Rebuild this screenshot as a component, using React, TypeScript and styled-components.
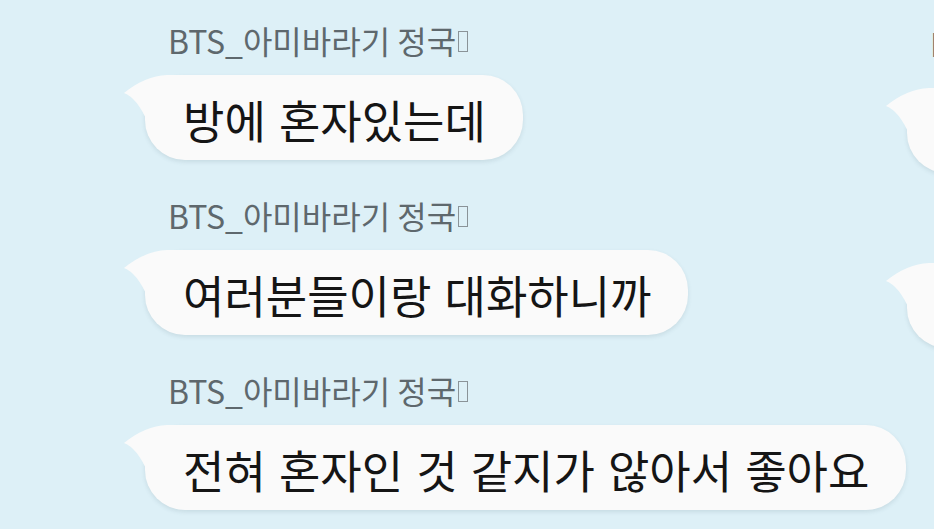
// modules
import React from 'react';
import styled, { createGlobalStyle } from 'styled-components';


const GlobalStyle = createGlobalStyle`
  html, body {
    margin: 0;
    padding: 0;
    background-color: #ddf0f7;
  }
`;

const Screen = styled.div`
  display: flex;
  align-items: flex-start;
  width: 934px;
  height: 529px;
  overflow: hidden;
  background-color: #ddf0f7;
  font-family: "Noto Sans CJK KR", "Noto Sans", sans-serif;
`;

const Column = styled.div`
  display: flex;
  flex-direction: column;
  flex-shrink: 0;
  width: ${({ $width }: { $width: number; $top: number; $left: number }) => $width}px;
  padding-top: ${({ $top }) => $top}px;
  margin-left: ${({ $left }) => $left}px;
`;

const Row = styled.div`
  display: flex;
  flex-direction: column;
  align-items: flex-start;
  gap: ${({ $gap }: { $gap: number; $before?: number }) => $gap}px;
  margin-top: ${({ $before }) => $before || 0}px;
  margin-bottom: 39px;
`;

const Sender = styled.div`
  display: flex;
  align-items: center;
  padding-left: 23px;
  font-size: 32px;
  line-height: 32px;
  color: #5e686d;
  white-space: nowrap;
`;

const Tofu = styled.span`
  display: inline-block;
  width: 10px;
  height: 21px;
  margin-left: 2px;
  margin-top: 2px;
  border: 1.5px solid #8a9398;
  box-sizing: border-box;
`;

const Bubble = styled.div`
  position: relative;
  display: inline-flex;
  align-items: center;
  height: 85px;
  min-width: ${({ $min }: { $min?: number }) => $min || 0}px;
  padding: 0 37px 0 38px;
  box-sizing: border-box;
  border-radius: 40px;
  background-color: #fafafa;
  box-shadow: 0 2px 4px rgba(70, 100, 115, 0.14);
  font-size: 45px;
  line-height: 50px;
  color: #151515;
  word-spacing: 3px;
  white-space: nowrap;
`;

const BubbleText = styled.span`
  position: relative;
  top: 2px;
`;

const TailShape = styled.svg`
  position: absolute;
  left: -22px;
  top: 0;
  width: 70px;
  height: 46px;
`;


const Tail = () => (
  <TailShape viewBox="0 0 70 46">
    <path
      d="M 70 0 L 44 0 Q 22 1 1 18 Q 14 23 24 46 L 70 46 Z"
      fill="#fafafa"
    />
  </TailShape>
);

const Message = ({ text, min }: { text?: string, min?: number }) => (
  <Bubble $min={min}>
    <Tail />
    {text && <BubbleText>{text}</BubbleText>}
  </Bubble>
);

const SENDER = 'BTS_아미바라기 정국';

const messages = [
  '방에 혼자있는데',
  '여러분들이랑 대화하니까',
  '전혀 혼자인 것 같지가 않아서 좋아요'
];


const App = () => {
  return (
    <>
      <GlobalStyle />
      <Screen>
        <Column $width={762} $top={24} $left={145}>
          {messages.map((text) => (
            <Row key={text} $gap={19}>
              <Sender>
                {SENDER}
                <Tofu />
              </Sender>
              <Message text={text} />
            </Row>
          ))}
        </Column>

        {/* next screen, cut off at the right edge */}
        <Column $width={300} $top={27} $left={0}>
          <Row $gap={29}>
            <Sender>{SENDER}</Sender>
            <Message min={300} />
          </Row>
          <Row $gap={0} $before={51}>
            <Message min={300} />
          </Row>
        </Column>
      </Screen>
    </>
  );
}

export default App;
